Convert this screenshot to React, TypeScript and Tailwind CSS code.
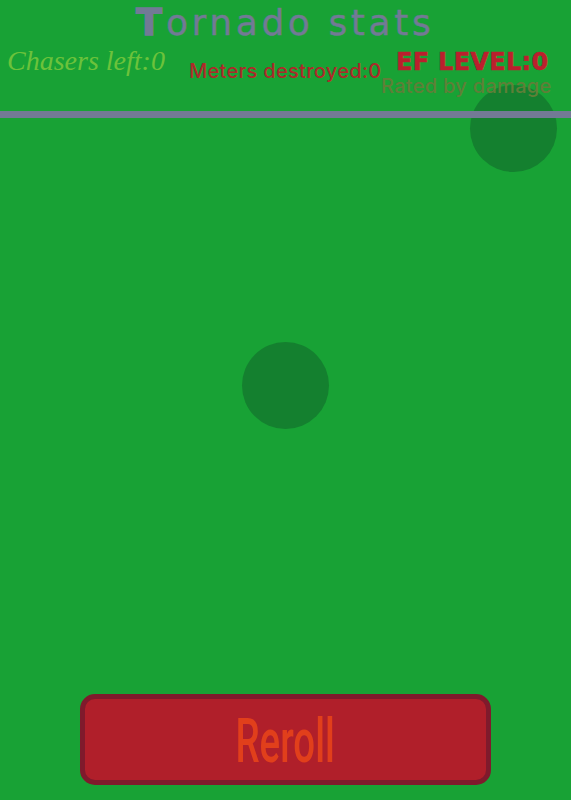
export default function App() {
  return (
    <div className="relative h-[800px] w-full overflow-hidden bg-[#18a235]">
      <div className="absolute left-[470px] top-[85px] h-[87px] w-[87px] rounded-full bg-[#14802f]" />
      <div className="absolute left-[242px] top-[342px] h-[87px] w-[87px] rounded-full bg-[#14802f]" />

      <div className="relative flex h-[800px] flex-col">
        <h1 className="h-[42px] whitespace-nowrap pl-[136px] pt-[3px] font-['DejaVu_Sans',sans-serif] text-[36px] leading-[38px] tracking-[3.6px] text-[#727a95] [-webkit-text-stroke:0.4px_#727a95]">
          <span className="text-[38px] font-bold leading-[38px] tracking-[4px] [-webkit-text-stroke:1.5px_#727a95]">T</span>ornado stats
        </h1>
        <div className="flex h-[69px] items-start">
          <p className="ml-[7px] mt-[2px] w-[182px] shrink-0 whitespace-nowrap font-[cursive] text-[28px] italic leading-[34px] text-[#6cc23b]">
            Chasers left:0
          </p>
          <p className="mt-[17px] w-[207px] shrink-0 whitespace-nowrap font-['Inter',sans-serif] text-[20px] font-medium leading-[24px] tracking-[0.3px] text-[#ac2a2a]">
            Meters destroyed:0
          </p>
          <div className="-ml-[15px] mt-[7px]">
            <p className="whitespace-nowrap pl-[15px] font-['DejaVu_Sans',sans-serif] text-[24px] font-bold leading-[26px] tracking-[0.3px] text-[#bb1f2d] [-webkit-text-stroke:0.6px_#bb1f2d]">
              EF LEVEL:0
            </p>
            <p className="whitespace-nowrap font-['Inter',sans-serif] text-[20px] font-medium leading-[22px] tracking-[0.3px] text-[#5f7f38]">
              Rated by damage
            </p>
          </div>
        </div>
        <div className="h-[7px] w-full bg-[#727a95]" />

        <div className="mt-auto mb-[15px] flex justify-center">
          <button className="flex h-[91px] w-[411px] items-center justify-center rounded-[15px] border-[5px] border-[#7f1a2c] bg-[#b01f2a] pt-[3px]">
            <span className="inline-block scale-x-[0.62] font-['Roboto',sans-serif] text-[62px] font-medium leading-none text-[#e13f1b]">
              Reroll
            </span>
          </button>
        </div>
      </div>
    </div>
  );
}
